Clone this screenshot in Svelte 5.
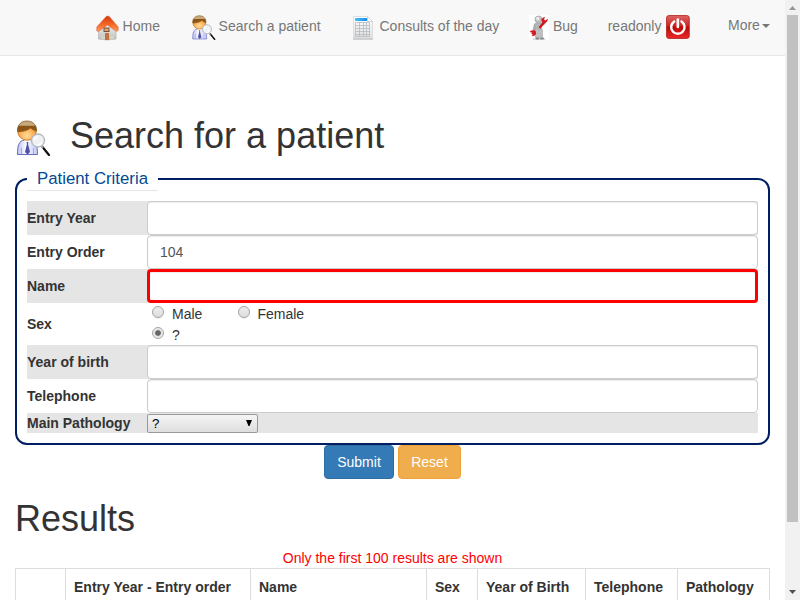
<script>
  const columns = [
    ['', 50], ['Entry Year - Entry order', 185], ['Name', 176], ['Sex', 51],
    ['Year of Birth', 108], ['Telephone', 92], ['Pathology', 92]
  ];
</script>

{#snippet person(size)}
  <svg width={size} height={size} viewBox="0 0 36 36">
    <defs>
      <radialGradient id="face" cx=".5" cy=".75" r=".65"><stop offset="0" stop-color="#ffdc9c" /><stop offset=".6" stop-color="#ffae50" /><stop offset="1" stop-color="#d9801f" /></radialGradient>
      <linearGradient id="hair" x1="0" y1="0" x2="0" y2="1"><stop offset="0" stop-color="#c4a67c" /><stop offset=".4" stop-color="#c9ab80" /><stop offset=".5" stop-color="#8a5414" /><stop offset="1" stop-color="#8f5816" /></linearGradient>
      <linearGradient id="coat" x1="0" y1="0" x2="1" y2="0"><stop offset="0" stop-color="#b9bff7" /><stop offset=".4" stop-color="#fafaff" /><stop offset="1" stop-color="#c5caf8" /></linearGradient>
    </defs>
    <path d="M2.500 34.500c0-9 1-13.500 7-14.500h6c5 1 7 5 7 14.500z" fill="url(#coat)" stroke="#686dbd" />
    <path d="M6.500 28v6M18.500 28v6" stroke="#a3a8e4" />
    <path d="M9 20l3.500 4.500L16 20z" fill="#fff" />
    <path d="M11.500 22h2l-.5 2 2 8-2.500 2.500L10 32l2-8z" fill="#4c51a5" />
    <circle cx="12" cy="11" r="9.300" fill="url(#face)" stroke="#b56d1c" stroke-width=".8" />
    <path d="M2.500 11.500C2 5 6 1 12 1s10 4 9.500 10c-2-.5-4-1.500-6-3-3 2.500-8 4-13 3.500z" fill="url(#hair)" stroke="#80571f" stroke-width=".7" />
    <path d="M27.500 27l6.500 8" stroke="#111" stroke-width="2.200" stroke-linecap="round" />
    <path d="M26 26l2 2" stroke="#aaa" stroke-width="2" />
    <circle cx="23" cy="20.500" r="6.500" fill="#eef2f5" stroke="#b5b8ba" stroke-width="1.300" />
    <path d="M19 20q1-3 4-3M22.500 25q3 0 4-3" fill="none" stroke="#fff" stroke-width="1.500" />
  </svg>
{/snippet}

<div class="window">
  <div class="page">
    <nav>
      <a style="width:95px">
        <svg width="24" height="26" viewBox="0 0 24 26">
          <defs>
            <linearGradient id="roof" x1="0" y1="0" x2="0" y2="1"><stop offset="0" stop-color="#d23a0b" /><stop offset=".6" stop-color="#fa6b28" /><stop offset="1" stop-color="#ff9d68" /></linearGradient>
            <linearGradient id="wall" x1="0" y1="0" x2="0" y2="1"><stop offset="0" stop-color="#fff" /><stop offset="1" stop-color="#bcbcb8" /></linearGradient>
          </defs>
          <path d="M2.500 14L11.500 6l8.500 8v10q-9 2-17.500 0z" fill="url(#wall)" stroke="#aaa" stroke-width=".6" />
          <path d="M10.500 1.200L.8 12v4l2 .3L11.500 10l8.700 6.300 2-.7V12L13 1.200z" fill="url(#roof)" stroke="#d65220" stroke-width=".5" />
          <rect x="8" y="13" width="5" height="3.500" fill="#e3a06a" stroke="#73503b" />
          <rect x="9" y="18" width="4" height="7" fill="#c0743c" />
          <path d="M5 21.500h4v3H5zm9 0h4v3h-4z" fill="#d5d5cc" />
        </svg><span>Home</span>
      </a>
      <a style="width:160px">{@render person(25)}<span>Search a patient</span></a>
      <a style="width:178px">
        <svg width="25" height="26" viewBox="0 0 25 26">
          <defs>
            <linearGradient id="paper" x1="0" y1="0" x2="0" y2="1"><stop offset="0" stop-color="#fff" /><stop offset="1" stop-color="#dedede" /></linearGradient>
            <linearGradient id="bar"><stop offset="0" stop-color="#42c5f8" /><stop offset="1" stop-color="#168be8" /></linearGradient>
          </defs>
          <path d="M2.500 1.500h14l5 5v17.500h-19z" fill="url(#paper)" stroke="#dedede" />
          <path d="M2 24h20" stroke="#b9b9b9" />
          <path d="M16.500 1.500v5h5z" fill="#fff" stroke="#d3d3d3" />
          <rect x="4" y="3" width="12" height="3" fill="url(#bar)" />
          <path d="M4.500 7.500h14v14h-14zM8.500 7v14M12.500 7v14M15.500 7v14M4.500 10.500h14M4.500 13.500h14M4.500 16.500h14M4.500 19.500h14" fill="none" stroke="#b5bbc0" stroke-width=".8" />
        </svg><span>Consults of the day</span>
      </a>
      <a style="width:79px">
        <svg width="20" height="25" viewBox="0 0 20 25">
          <rect width="20" height="25" fill="#fff" />
          <ellipse cx="10" cy="24" rx="7" ry="1" fill="#d5d5d5" />
          <path d="M6.500 10l-1 5M8 15v8M12 15v8M13 9l2-1" stroke="#aaa" stroke-width="3.500" stroke-linecap="round" />
          <path d="M6 8h7l-.5 8H7z" fill="#b5b5b5" />
          <path d="M8 15v7M12 15v7" stroke="#cfcfcf" stroke-width="1.200" />
          <circle cx="9.500" cy="4.500" r="3.500" fill="#c0c0c0" stroke="#969696" stroke-width=".6" />
          <circle cx="8.800" cy="3.500" r="1.700" fill="#eee" />
          <path d="M10.500 13l5.500-7M3 19l3-3" stroke="#c9151b" stroke-width="2.300" />
          <path d="M19 3.500l-2.500 2-1.500-1 1-2.500c-2.500.5-4.500 2-3 4.500s5.500 2 6-3zM.5 17l2.500.5 1 2-1.500 1.500c3.500.5 5-1.500 4.500-3.500s-4-3.500-6.500-.5z" fill="#d71920" />
          <path d="M7 23.500h3m2 0h3" stroke="#888" stroke-width="1.300" />
        </svg><span>Bug</span>
      </a>
      <a class="user"><span>readonly</span>
        <svg width="25" height="25" viewBox="0 0 25 25">
          <defs><linearGradient id="power" x1="0" y1="0" x2="0" y2="1"><stop offset="0" stop-color="#dc6464" /><stop offset=".45" stop-color="#cd2525" /><stop offset=".5" stop-color="#bd0808" /><stop offset="1" stop-color="#ed2929" /></linearGradient></defs>
          <rect x=".5" y=".5" width="22.800" height="23" rx="2.500" fill="url(#power)" stroke="#b5201f" stroke-width=".8" />
          <path d="M8.200 6.500a6.700 6.700 0 1 0 7.300 0" fill="none" stroke="#fff" stroke-width="2.500" stroke-linecap="round" />
          <path d="M11.850 4.500v7.500" stroke="#fff" stroke-width="2.600" stroke-linecap="round" />
        </svg>
      </a>
      <a class="more">More<i></i></a>
    </nav>

    <main>
      <div class="title">{@render person(36)}<h1>Search for a patient</h1></div>
      <fieldset>
        <legend>Patient Criteria</legend>
        <div class="row shade"><b>Entry Year</b><input type="text" /></div>
        <div class="row"><b>Entry Order</b><input type="text" value="104" /></div>
        <div class="row shade"><b>Name</b><input type="text" class="required" /></div>
        <div class="row sex">
          <b>Sex</b>
          <div class="radios">
            <label class="first"><span class="radio"></span>Male</label>
            <label class="second"><span class="radio"></span>Female</label>
            <label class="last"><span class="radio on"></span>?</label>
          </div>
        </div>
        <div class="row shade"><b>Year of birth</b><input type="text" /></div>
        <div class="row"><b>Telephone</b><input type="text" /></div>
        <div class="row shade short"><b>Main Pathology</b>
          <div class="select"><span>?</span><svg width="6" height="6" viewBox="0 0 6 6"><path d="M0 0h6L3.500 6h-1z" /></svg></div>
        </div>
      </fieldset>
      <div class="buttons"><button>Submit</button><button class="reset">Reset</button></div>
      <h1 class="results">Results</h1>
      <p>Only the first 100 results are shown</p>
      <table>
        <thead><tr>{#each columns as [name, width]}<th style="width:{width}px">{name}</th>{/each}</tr></thead>
      </table>
    </main>
  </div>
  <div class="scroll">
    <svg width="7" height="4" viewBox="0 0 7 4"><path d="M3.500 0L7 4H0z" fill="#969696" /></svg>
    <div class="thumb"></div>
    <svg class="down" width="7" height="4" viewBox="0 0 7 4"><path d="M0 0h7L3.500 4z" fill="#505050" /></svg>
  </div>
</div>

<style>
  .window { display: flex; width: 800px; height: 600px; overflow: hidden; background: #fff; color: #333; font: 14px/20px "Liberation Sans", Arial, sans-serif; }
  .window, .window * { box-sizing: border-box; }
  svg { display: block; flex: none; }
  .page { width: 785px; height: 600px; overflow: hidden; }
  nav { display: flex; height: 56px; padding: 15px 0 0 96px; background: #f8f8f8; border-bottom: 1px solid #e7e7e7; color: #777; }
  nav a { display: flex; height: 25px; flex: none; white-space: nowrap; }
  nav span { margin: 1px 0 0 2.600px; }
  nav a:nth-child(3) span { margin-left: 3.500px; }
  nav a:nth-child(4) span { margin-left: 4px; }
  nav .user { width: 120px; gap: 4.600px; }
  nav .user span { margin-left: -.3px; }
  .more { align-items: flex-start; }
  .more i { margin: 9px 0 0 2px; border: 4px solid transparent; border-top-color: #777; border-bottom: 0; }
  main { padding: 0 15px; }
  .title { display: flex; height: 110px; padding-top: 60px; }
  .title svg { margin-top: 4px; }
  h1 { margin: 0 0 0 19px; font-size: 36px; line-height: 40px; font-weight: 400; }
  fieldset { width: 755px; height: 279px; margin: 0; padding: 0 10px 10px; border: 2px solid #001f63; border-radius: 12px; min-width: 0; }
  legend { width: 131px; height: 25px; margin: 0 0 10px; padding: 1px 10px 0; border-bottom: 1px solid #e5e5e5; color: #004a93; font-size: 16.800px; line-height: 24px; white-space: nowrap; }
  .row { display: flex; align-items: center; height: 34px; }
  .shade { background: #e5e5e5; }
  .row b { width: 120px; flex: none; }
  input { flex: 1; min-width: 0; height: 34px; margin: 0; padding: 6px 12px; border: 1px solid #ccc; border-radius: 4px; background: #fff; box-shadow: inset 0 1px 1px rgba(0,0,0,.075); color: #555; font: inherit; outline: none; }
  .required { border: 3px solid red; }
  .sex { height: 42px; }
  .radios { display: flex; flex-wrap: wrap; width: 200px; height: 42px; padding-left: 5px; }
  label { display: flex; height: 21px; padding-top: 1px; }
  .first { width: 86px; }
  .second .radio { margin-right: 7.400px; }
  .last { width: 180px; }
  .radio { width: 12px; height: 12px; margin: 2px 8px 0 0; border: 1px solid #a5a5a5; border-radius: 50%; background: linear-gradient(#eee, #ddd); box-shadow: 0 1px 1px #eee; }
  .on { padding: 2px; background: #666 content-box; box-shadow: inset 0 0 0 2px #e4e4e4; }
  .short { height: 20px; }
  .select { display: flex; justify-content: space-between; width: 111px; height: 19px; margin-top: 1px; padding: 0 5px 0 4px; border: 1px solid #999; border-radius: 2px; background: linear-gradient(#f5f5f5, #dedede); color: #000; font-size: 13.333px; line-height: 17px; }
  .select svg { margin-top: 5px; }
  .buttons { display: flex; justify-content: center; gap: 4px; height: 34px; }
  button { width: 70px; height: 34px; padding: 6px 0; border: 1px solid #2e6da4; border-radius: 4px; background: #337ab7; color: #fff; font: inherit; }
  .reset { width: 63px; border-color: #eea236; background: #f0ad4e; }
  .results { margin: 20px 0 9px; }
  p { margin: 0; color: red; text-align: center; }
  table { width: 755px; table-layout: fixed; border-collapse: collapse; }
  th { height: 37px; padding: 8px; border: 1px solid #ddd; text-align: left; vertical-align: top; white-space: nowrap; line-height: 20px; }
  .scroll { display: flex; flex-direction: column; align-items: center; width: 15px; height: 600px; padding: 6px 0; background: #f1f1f1; }
  .thumb { width: 11px; height: 507px; margin-top: 5px; background: #c1c1c1; }
  .down { margin-top: auto; }
</style>
